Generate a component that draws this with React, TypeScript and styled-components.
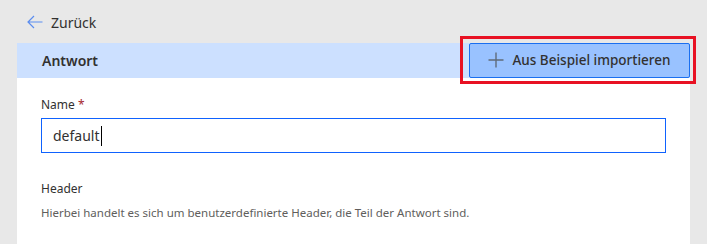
import React from "react";
import styled, { createGlobalStyle } from "styled-components";

const Global = createGlobalStyle`
  html, body { margin: 0; padding: 0; background: #e8e8e8; }
  body { font-family: "Segoe UI", "Noto Sans", "Open Sans", sans-serif; color: #323130; }
  * { box-sizing: border-box; }
`;

const Page = styled.div`
  position: relative;
  width: 707px;
  height: 244px;
  padding: 0 17px;
  overflow: hidden;
`;

const BackLink = styled.a`
  display: flex;
  align-items: center;
  gap: 8px;
  height: 43px;
  padding-left: 10px;
  padding-top: 1px;
  font-size: 14px;
  color: #323130;
  text-decoration: none;
`;

const Panel = styled.section`
  background: #ffffff;
  height: 201px;
`;

const SectionHeader = styled.div`
  display: flex;
  align-items: center;
  justify-content: space-between;
  height: 35px;
  background: #cce0ff;
  padding-left: 25px;
`;

const Title = styled.h2`
  margin: 0;
  font-size: 14px;
  font-weight: 600;
  color: #323130;
`;

const ImportButton = styled.button`
  display: flex;
  align-items: center;
  justify-content: center;
  gap: 8px;
  width: 221px;
  height: 35px;
  background: #99c2ff;
  border: 1px solid #1a6ff0;
  border-radius: 2px;
  font-family: inherit;
  font-size: 13.5px;
  font-weight: 500;
  color: #323130;
  padding: 0 0 1px 0;
`;

const Body = styled.div`
  padding: 19px 24px 0 24px;
`;

const Label = styled.label`
  display: block;
  font-size: 12px;
  line-height: 16px;
  margin-bottom: 5px;
  color: #323130;
`;

const Required = styled.span`
  color: #a4262c;
`;

const Input = styled.div`
  display: flex;
  align-items: center;
  height: 35px;
  border: 1px solid #0f62fe;
  padding: 0 11px;
  font-size: 14px;
  color: #323130;
`;

const Caret = styled.span`
  display: inline-block;
  width: 1px;
  height: 20px;
  background: #000;
  margin-left: 1px;
`;

const FieldTitle = styled.div`
  font-size: 12px;
  line-height: 16px;
  margin-top: 28px;
  color: #323130;
`;

const Description = styled.div`
  font-size: 11.5px;
  line-height: 16px;
  margin-top: 8px;
  color: #605e5c;
`;

const Highlight = styled.div`
  position: absolute;
  left: 460px;
  top: 36px;
  width: 236px;
  height: 48px;
  border: 3px solid #e81123;
  pointer-events: none;
`;

export default function App() {
  return (
    <>
      <Global />
      <Page>
        <BackLink href="#">
          <svg width="16" height="14" viewBox="0 0 16 14" fill="none">
            <path d="M15.5 7H1.2M7 1L1 7l6 6" stroke="#5b8def" strokeWidth="1.2" />
          </svg>
          Zurück
        </BackLink>
        <Panel>
          <SectionHeader>
            <Title>Antwort</Title>
            <ImportButton>
              <svg width="16" height="16" viewBox="0 0 16 16">
                <path d="M8 0.5v15M0.5 8h15" stroke="#5f6b7a" strokeWidth="1.4" />
              </svg>
              Aus Beispiel importieren
            </ImportButton>
          </SectionHeader>
          <Body>
            <Label>
              Name <Required>*</Required>
            </Label>
            <Input>
              default
              <Caret />
            </Input>
            <FieldTitle>Header</FieldTitle>
            <Description>
              Hierbei handelt es sich um benutzerdefinierte Header, die Teil der Antwort sind.
            </Description>
          </Body>
        </Panel>
        <Highlight />
      </Page>
    </>
  );
}
